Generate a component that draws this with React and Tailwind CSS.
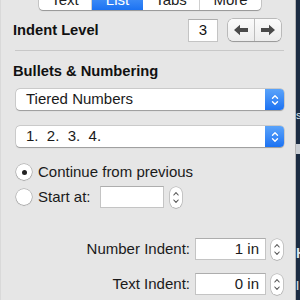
import React from "react";

function Chevrons({ color = "white", w = 8, h = 12 }) {
  return (
    <svg width={w} height={h} viewBox="0 0 8 12" fill="none" stroke={color} strokeWidth="1.4" strokeLinecap="round" strokeLinejoin="round">
      <path d="M1.5 4.2 L4 1.7 L6.5 4.2" />
      <path d="M1.5 7.8 L4 10.3 L6.5 7.8" />
    </svg>
  );
}

function Popup({ label }) {
  return (
    <div className="flex h-[21px] w-[268px] ml-[15px] rounded-[4px] bg-white shadow-[0_0_0_0.5px_rgba(0,0,0,0.2),0_0.5px_1px_rgba(0,0,0,0.25)] overflow-hidden">
      <div className="flex-1 flex items-center pl-[10px] text-[15px] text-[#1a1a1a] whitespace-pre">{label}</div>
      <div className="w-[19px] flex items-center justify-center bg-gradient-to-b from-[#5aa3fa] to-[#1b72f2]">
        <Chevrons />
      </div>
    </div>
  );
}

function SmallStepper() {
  return (
    <div className="w-[12px] h-[21px] rounded-[6px] bg-white shadow-[0_0_0_0.5px_rgba(0,0,0,0.25),0_0.5px_1px_rgba(0,0,0,0.2)] flex items-center justify-center">
      <svg width="8" height="15" viewBox="0 0 8 15" fill="none" stroke="#555" strokeWidth="1.1" strokeLinecap="round" strokeLinejoin="round">
        <path d="M1.8 5 L4 2.6 L6.2 5" />
        <path d="M1.8 10 L4 12.4 L6.2 10" />
      </svg>
    </div>
  );
}

function Field({ value, w }) {
  return (
    <div className={`${w} h-[22px] bg-white border border-[#c4c4c4] border-t-[#adadad] flex items-center justify-end pr-[6px] text-[15px] text-[#1a1a1a]`}>
      {value}
    </div>
  );
}

function Arrow({ dir }) {
  return (
    <svg width="16" height="12" viewBox="0 0 16 12" fill="#4a4a4a">
      {dir === "left" ? (
        <path d="M1 6 L7 0.8 L7 4 L15 4 L15 8 L7 8 L7 11.2 Z" />
      ) : (
        <path d="M15 6 L9 0.8 L9 4 L1 4 L1 8 L9 8 L9 11.2 Z" />
      )}
    </svg>
  );
}

export default function App() {
  return (
    <div className="w-[300px] h-[300px] overflow-hidden flex bg-[#1b2c42] font-['Liberation_Sans',Arial,sans-serif]">
      <div className="w-[296px] h-full bg-[#e6e6e6] border-r border-[#b5b5b5] border-l border-l-[#d9d9d9] flex flex-col shrink-0">
        {/* segmented control */}
        <div className="mt-[-12px] ml-[38px] w-[222px] h-[22px] flex rounded-[4px] bg-white shadow-[0_0_0_0.5px_rgba(0,0,0,0.25),0_0.5px_1px_rgba(0,0,0,0.25)] overflow-hidden text-[15px] text-[#222]">
          <div className="w-[53px] flex items-center justify-center border-r border-[#cfcfcf] pt-[2px]">Text</div>
          <div className="w-[51px] flex items-center justify-center bg-gradient-to-b from-[#5aa3fa] to-[#1b72f2] text-white pt-[2px]">List</div>
          <div className="w-[57px] flex items-center justify-center border-r border-[#cfcfcf] pt-[2px]">Tabs</div>
          <div className="flex-1 flex items-center justify-center pt-[2px]">More</div>
        </div>

        {/* Indent level */}
        <div className="mt-[8px] h-[24px] flex items-center pl-[12px] pr-[14px]">
          <div className="text-[14.7px] font-bold text-[#111] flex-1">Indent Level</div>
          <div className="w-[30px] h-[23px] bg-white border border-[#c4c4c4] border-t-[#adadad] flex items-center justify-center text-[15px] text-[#111]">3</div>
          <div className="ml-[10px] w-[53px] h-[22px] rounded-[5px] bg-gradient-to-b from-[#fbfbfb] to-[#ececec] shadow-[0_0_0_0.5px_rgba(0,0,0,0.35),0_0.5px_1px_rgba(0,0,0,0.2)] flex">
            <div className="flex-1 flex items-center justify-center border-r border-[#bdbdbd]"><Arrow dir="left" /></div>
            <div className="flex-1 flex items-center justify-center"><Arrow dir="right" /></div>
          </div>
        </div>

        <div className="mt-[8px] ml-[14px] w-[269px] h-px bg-[#c8c8c8]" />

        <div className="mt-[12px] h-[16px] leading-[16px] pl-[12px] text-[14.7px] font-bold text-[#111]">Bullets &amp; Numbering</div>

        <div className="mt-[10px]"><Popup label="Tiered Numbers" /></div>
        <div className="mt-[16px]"><Popup label="1.  2.  3.  4." /></div>

        {/* radios */}
        <div className="mt-[16px] h-[18px] flex items-center pl-[15px]">
          <div className="w-[16px] h-[16px] rounded-full bg-white shadow-[0_0_0_0.5px_rgba(0,0,0,0.3),0_0.5px_1px_rgba(0,0,0,0.25)] flex items-center justify-center">
            <div className="w-[5px] h-[5px] rounded-full bg-[#222]" />
          </div>
          <div className="ml-[6px] text-[15px] text-[#1a1a1a]">Continue from previous</div>
        </div>
        <div className="mt-[5px] h-[22px] flex items-center pl-[15px]">
          <div className="w-[16px] h-[16px] rounded-full bg-white shadow-[0_0_0_0.5px_rgba(0,0,0,0.3),0_0.5px_1px_rgba(0,0,0,0.25)]" />
          <div className="ml-[6px] w-[62px] text-[15px] text-[#1a1a1a]">Start at:</div>
          <Field value="" w="w-[64px]" />
          <div className="ml-[6px]"><SmallStepper /></div>
        </div>

        {/* indents */}
        <div className="mt-[30px] h-[22px] flex items-center">
          <div className="w-[189px] text-right text-[15px] text-[#1a1a1a]">Number Indent:</div>
          <div className="ml-[5px]"><Field value="1 in" w="w-[71px]" /></div>
          <div className="ml-[5px]"><SmallStepper /></div>
        </div>
        <div className="mt-[13px] h-[22px] flex items-center">
          <div className="w-[189px] text-right text-[15px] text-[#1a1a1a]">Text Indent:</div>
          <div className="ml-[5px]"><Field value="0 in" w="w-[71px]" /></div>
          <div className="ml-[5px]"><SmallStepper /></div>
        </div>
      </div>
      <div className="flex-1 flex flex-col text-[11px] text-[#dfe6ee] leading-none">
        <div className="h-[110px]" />
        <div className="h-[14px] overflow-hidden">s</div>
        <div className="h-[20px]" />
        <div className="h-[10px] bg-[#c9ced4]" />
        <div className="h-[92px]" />
        <div className="h-[14px] overflow-hidden font-bold text-[14px]">H</div>
        <div className="h-[20px]" />
        <div className="h-[10px] overflow-hidden text-[14px]">l</div>
      </div>
    </div>
  );
}
